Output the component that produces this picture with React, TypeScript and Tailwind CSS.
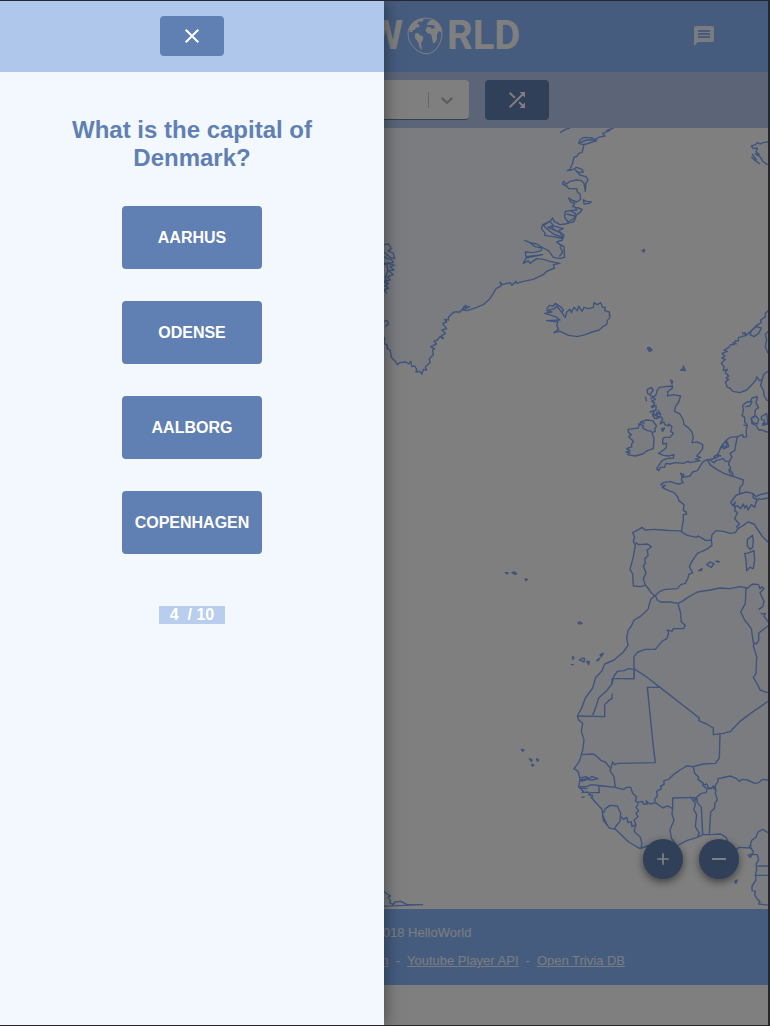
import { MdAdd, MdClose, MdMessage, MdRemove, MdShuffle } from "react-icons/md";

const northAtlantic = [
  // Greenland
  "M700,24 L680,32 690,31 668,40 675,48 655,52 648,58 636,66 612,74 606,98 596,100 592,108 582,112 578,130 570,148 562,152 575,150 590,142 606,148 610,156 596,158 586,150 600,165 618,170 624,180 618,190 616,214 612,190 604,182 590,180 570,184 560,192 550,184 548,192 560,198 566,206 590,206 592,216 600,222 602,238 590,246 575,240 566,234 572,246 584,250 578,262 596,264 606,268 600,278 590,284 584,300 580,306 570,308 556,312 540,314 522,304 518,294 510,304 488,314 484,326 496,340 494,346 520,350 548,356 552,346 536,332 550,326 530,320 510,316 524,330 546,350 548,360 530,366 544,378 538,372 552,380 554,412 540,416 520,412 505,392 490,384 470,372 450,368 434,361 450,368 465,380 486,384 484,392 460,398 436,396 438,410 488,404 438,414 430,430 445,422 450,430 470,416 490,418 510,424 540,430 520,434 524,444 500,454 490,464 460,478 430,484 410,490 408,484 396,496 390,488 366,494 360,486 364,498 348,506 340,520 330,536 310,554 290,562 262,572 250,570 268,560 250,562 258,556 240,576 222,576 205,592 206,600 194,598 200,606 188,610 200,626 186,630 196,640 184,648 190,656 180,650 172,660 162,664 170,672 152,680 164,686 158,690 160,704 148,716 150,728 136,740 140,750 130,748 126,762 118,754 108,756 110,748 104,738 96,740 92,724 86,732 76,726 60,728 52,734 44,722 34,712 30,690 22,686 22,676 12,670 14,654 L-40,600 -40,10 700,10Z",
  "M638,54 L612,52 600,60 596,70 610,74 625,70 650,62Z",
  "M600,68 L620,60 645,60",
  "M540,38 L556,28 570,24",
  "M610,240 L620,244 634,246 626,250 612,252Z",
  "M556,274 L572,272 586,280 584,294 564,306 554,292Z",
  "M560,282 L584,288 M568,272 L590,270 586,262 576,258",
  "M490,316 L510,304 520,316 504,322 540,338 550,354 520,342 500,326Z",
  "M540,380 L548,396 538,410",
  "M12,374 L26,372 34,386 24,392 40,400 44,416 30,412 12,396 M12,410 L22,416 34,418 40,428 12,430 M12,434 L24,430 44,436 30,440 42,450 26,452 40,464 22,470 30,480 12,484 M12,486 L26,490 14,498 26,504 12,510 20,520 M20,430 L24,452 16,470 20,498",
  "M12,604 L22,602 26,612 16,620",
  // Iceland
  "M500,568 L508,556 520,558 526,550 544,562 550,570 546,578 556,592 560,576 570,568 574,578 582,562 592,572 596,558 606,574 612,562 626,566 640,562 642,548 652,554 662,548 668,562 676,562 674,572 688,576 690,592 682,602 680,614 668,620 658,630 636,636 616,644 592,650 566,646 540,634 522,638 536,628 530,616 534,606 500,602 540,600 526,590 494,580 516,576 500,572 524,566 530,558 548,580",
];

const europe = [
  // Continental Europe with Iberia
  "M490,392 L470,396 456,390 446,390 440,378 426,370 424,356 434,348 436,330 446,322 438,310 442,290 426,294 420,306 404,312 398,318 400,332 396,346 404,352 404,366 412,376 408,392 410,410 400,412 398,404 382,410 360,412 346,424 334,440 324,462 312,470 318,474 300,478 278,486 272,496 262,512 248,516 240,528 218,532 222,524 212,520 216,530 214,540 220,548 206,552 190,548 182,544 160,548 152,554 166,556 156,562 176,572 192,578 204,592 206,602 222,614 220,632 228,636 230,642 220,644 220,660 214,694 200,692 180,692 160,690 130,688 106,690 96,682 84,690 68,698 74,712 70,724 76,736 70,770 60,808 68,822 70,858 90,860 108,856 122,876 134,888 150,874 166,868 202,866 212,854 226,850 234,834 236,824 248,818 238,800 246,784 262,760 290,748 306,736 304,720 306,704 318,692 340,694 360,700 376,698 384,686 400,676 414,666 432,672 444,690 456,708 474,726 500,740 500,392Z",
  "M76,728 L86,734 112,732 124,740 112,750 114,768 104,776 106,790 100,798 108,820 100,836 106,856",
  "M214,694 L224,702 232,706 260,712 264,708 278,716 288,722 304,720",
  "M278,486 L292,478 300,494 320,508 342,520 364,528 372,530 400,540 398,554 390,562 388,582",
  "M300,480 L312,488 318,482 340,476 346,484 358,484 356,494 362,504 358,516 366,524",
  "M314,472 L326,470 320,464 334,468 M330,448 L336,436 348,442 352,426 356,440 342,446 336,440 M338,434 L348,424 352,432",
  "M382,410 L378,430 374,452 360,460 366,470 358,484 M354,508 L366,516 370,528",
  "M388,582 L376,588 362,608 368,616 376,606 372,620 384,618 392,626 400,612 404,624 410,616 414,630 424,614 434,622 438,606 446,600 430,594 428,580 410,576Z",
  "M428,580 L438,590 450,584 474,578 M438,606 L446,596 456,598 474,594",
  "M376,620 L374,632 382,638 374,656 388,672 380,680 384,686",
  "M424,354 L438,348 446,358 442,372 428,368Z M454,350 L470,340 474,372 458,376 464,362 454,358Z M398,316 L410,306 426,304 420,318 406,320",
  "M400,376 L412,376 M456,372 L474,368",
  // Norway and Sweden
  "M500,0 L474,32 466,40 466,50 452,60 454,68 440,76 424,92 410,104 404,98 396,110 386,112 384,124 376,122 372,134 362,134 356,142 342,150 352,154 336,160 344,168 336,174 346,178 334,190 342,200 340,212 352,208 346,218 356,228 348,234 356,238 346,246 352,262 360,264 368,274 390,278 410,270 424,256 438,240 440,230 448,242 456,240 452,256 460,270 462,286 470,300 500,310Z",
  "M424,92 L438,80 454,84 446,100 432,110 420,104Z M396,98 L410,104 400,110 M366,128 L380,132",
  "M474,94 L466,104 470,120 466,140 474,160 M456,240 L462,222 474,214",
  // Great Britain
  "M148,262 L164,260 188,258 186,266 174,274 172,288 190,284 212,288 206,306 196,320 194,334 210,342 220,360 222,374 234,382 246,396 250,412 246,428 262,426 278,434 278,446 268,460 260,468 272,472 256,478 270,482 240,488 234,484 220,490 196,488 180,492 168,490 164,502 152,502 146,512 140,506 156,482 170,476 190,474 192,464 176,468 160,466 146,460 152,456 168,444 170,430 158,432 158,418 162,412 180,412 190,400 182,394 186,380 176,372 176,378 164,374 162,366 150,372 158,356 150,348 140,356 142,340 128,348 132,334 120,336 138,330 138,316 126,322 134,308 124,304 136,298 130,292 138,284 142,270Z",
  "M112,268 L124,262 130,270 120,284 112,280Z M120,286 L130,290 122,298 M106,290 L110,304 M122,318 L130,324 M128,342 L148,352 134,356Z M154,386 L164,384 158,394Z M138,336 L152,344 144,330",
  // Ireland
  "M54,388 L70,386 84,384 88,374 96,364 110,360 128,362 140,378 134,386 136,394 126,398 132,414 130,446 112,452 98,462 76,468 52,464 60,458 48,456 60,452 50,446 66,440 64,434 70,424 56,410 64,404 56,398Z",
  "M84,372 L100,376 98,384 112,392 126,394 M90,366 L104,370",
  "M112,144 L118,142 126,150 118,154Z M118,144 L122,152 M212,210 L220,206 220,198 226,212Z M182,240 L186,252 188,244Z M0,46 L-4,44",
  // Mediterranean islands
  "M428,706 L430,720 428,742 420,748 412,738 412,718Z M432,752 L434,780 430,806 420,802 410,812 408,780 404,760 412,760 422,756Z M290,794 L300,786 312,792 304,802Z M266,812 L276,806 274,812Z M316,784 L328,786 320,782",
];

const africa = [
  "M286,106 L272,118 264,148 240,170 222,180 214,198 204,212 200,234 204,256 190,276 162,300 134,312 126,332 106,354 98,384 76,414 64,446 52,468 56,480 68,490 64,514 72,540 68,570 64,584 58,604 42,626 54,634 60,656 56,682 70,694 66,698 84,696 94,708 100,720 126,748 130,782 142,796 148,804 166,808 206,846 240,866 262,858 300,850 350,858 380,842 412,832 430,824 450,824 482,822 498,832 510,860 532,868 536,862 572,864 580,874 578,884 592,884 596,900 588,912 590,930 586,944 588,960 576,978 576,992 586,994 584,1004 592,1018 600,1024 596,1032 660,1040 660,190 624,184 612,168 616,160 604,162 592,152 608,140 612,124 600,98 612,86 606,80 600,86 596,74 580,72 572,76 564,84 540,80 510,86 480,84 450,90 412,96 384,112 366,124 354,130 330,126 302,126 292,120Z",
  "M558,84 L556,130 542,156 554,180 574,206 580,248 588,252 596,242 596,220 608,210 624,198",
  "M582,248 L580,258 590,290 588,340 580,352 594,376 600,390 624,398",
  "M354,130 L362,160 364,186 376,196 370,206 340,206 336,214 322,210 326,220 320,236 306,244 286,268 256,268 234,276 222,290 222,356 156,356 156,416 148,420 134,434 134,470 52,468",
  "M222,328 L206,326 192,332 172,334 162,348 156,372 140,392 116,414 108,440 98,466",
  "M156,356 L222,356 222,328",
  "M222,326 L264,354 300,382 418,474 416,482 440,492 460,504 460,524 490,520 512,514 540,484 572,460 624,424",
  "M300,382 L262,382 280,560 286,608 174,610 164,614 158,606 152,626",
  "M64,584 L100,582 112,590 124,602 136,606 152,626 150,632 162,650 166,682",
  "M60,654 L78,650 86,656 96,650 114,656 96,660 84,658 62,664 M58,660 L84,656 M60,680 L80,680 94,674 130,678 166,682 M60,684 L82,686 M116,678 L118,698 90,698 M84,704 L98,706 92,716",
  "M166,682 L190,688 200,682 212,682 218,700 230,712 226,722 236,730 228,742 236,752 228,760 234,770 222,780 228,794 216,800 214,786 204,788 200,772 190,778 184,770",
  "M130,760 L136,746 150,736 172,738 182,760 180,784 168,798 164,806 M128,766 L142,796",
  "M228,794 L222,812 228,820 240,830 246,850 242,866",
  "M232,728 L248,724 250,732 262,732 258,722 270,732 286,728 300,738 310,744 322,738 338,746 336,762 342,780 330,810 334,834 350,858",
  "M286,728 L284,718 292,708 290,694 304,686 302,678 312,674 312,662 326,658 340,644 360,630 380,618 400,620",
  "M400,620 L430,612 466,610 478,594 480,522",
  "M400,620 L404,640 416,652 414,658 430,670 428,676 442,688 438,698 424,700 410,712 338,714 338,746",
  "M390,710 L406,730 402,750 410,764 406,800 418,820 412,830 M400,712 L406,722 410,712 412,728 424,742 428,822",
  "M442,688 L456,680 468,690 466,700 472,720 464,730 464,744 452,756 448,822",
  "M428,676 L440,672 444,682 454,686 460,678 466,690 466,676 474,664 474,656 484,654 510,648 530,656 538,664 546,658 562,660 584,670 596,668 608,658 624,660",
  "M572,864 L572,850 576,840 588,832 594,816 608,808 624,818 M566,856 L576,868 M592,918 L624,918 M586,946 L624,946",
  "M564,886 L576,882 572,892Z M524,964 L532,960 528,970Z M64,712 L74,710",
  "M54,188 L60,186 66,190 58,192Z M38,290 L42,292 38,298Z M32,314 L42,314 M58,300 L68,294 74,296 72,306 64,302Z M80,304 L88,304 86,314Z M110,302 L120,294 114,302Z M120,284 L130,280 124,290Z",
  // Cape Verde and the Azores
  "M-116,568 L-108,570 -112,574Z M-92,596 L-84,600 -86,604Z M-84,612 L-78,616 -84,618Z M-70,596 L-64,600 -68,604Z",
  "M-164,38 L-156,38 -158,42Z M-144,38 L-136,36 -130,42 -138,42Z M-104,56 L-98,58 -102,62Z",
];

const svalbard = [
  "M600,425 L578,428 572,432 562,428 556,434 544,438 550,446 562,444 558,456 568,464 556,462 572,472 578,484 592,494 600,494",
  "M544,470 L556,482 570,492 M546,462 L560,480",
  "M216,752 L224,748 222,756Z",
];

const southAmerica = ["M36,30 L52,42 62,48 54,52 62,62 58,68 70,74 74,66 92,64 112,74 158,74 L20,80 20,34Z"];

function Coastlines({ paths, transform }: { paths: string[]; transform: string }) {
  return (
    <g transform={transform}>
      {paths.map((d) => (
        <path key={d} d={d} vectorEffect="non-scaling-stroke" />
      ))}
    </g>
  );
}

function WorldMap() {
  return (
    <svg
      viewBox="0 128 768 781"
      role="img"
      aria-label="World map"
      className="block h-auto w-full fill-[#f5f9ff] stroke-[#7da8fa] stroke-[1.4px]"
      strokeLinejoin="round"
    >
      <Coastlines paths={northAtlantic} transform="translate(380 120) scale(0.33333)" />
      <Coastlines paths={svalbard} transform="translate(570 0) scale(0.33333)" />
      <Coastlines paths={africa} transform="translate(560 560) scale(0.33333)" />
      <Coastlines paths={europe} transform="translate(610 300) scale(0.33333)" />
      <Coastlines paths={southAmerica} transform="translate(370 880) scale(0.33333)" />
    </svg>
  );
}

function Globe() {
  return (
    <svg viewBox="0 0 36 38" className="h-[38px] w-9 fill-current" aria-hidden="true">
      <path
        d="M18 1.2C28 .8 35 7 35 16.500C35 25 29 36.500 20 36.800C11 37 1 27 1 17C1 8 8 1.500 18 1.200Z"
        className="fill-none stroke-current stroke-1"
      />
      <path d="M2 12C4 6 9 2.500 15 2L17 3L14 5L12 4L10 7L13 8L11 11L9 10L8 13L5 13L6 15L3 15Z" />
      <path d="M8 16.500L11 16L13 18L16.500 20L15.500 24L14 26L15 33L13 31L11 25L8 21Z" />
      <path d="M20 8L21 5L24 3L27 3L31 6L34 11L34.500 16L32 14L30 17L30 22L28 26L26 26L25 21L24 17L20 16L18.500 13L20 10L23 10L25 12L28 11L27 8L24 8Z" />
    </svg>
  );
}

function Header() {
  return (
    <header className="relative flex h-[71px] items-center justify-center bg-[#8cb8ff] pb-px">
      <h1 className="flex items-center font-[Roboto,'Liberation_Sans',sans-serif] text-[40px] leading-none font-bold text-white">
        <span>HELLO</span>
        <span className="flex items-center gap-1">
          W<Globe />
          RLD
        </span>
      </h1>
      <button
        type="button"
        aria-label="Open trivia"
        className="absolute right-8 flex h-10 w-16 items-center justify-center text-[#f4f8ff]"
      >
        <MdMessage className="size-6" />
      </button>
    </header>
  );
}

function CountryBar() {
  return (
    <div className="flex justify-center gap-4 bg-[#b6caee] py-2">
      <div className="relative w-[249px]">
        <select
          aria-label="Country"
          className="h-10 w-full appearance-none rounded border-b border-[#6080b3] bg-white px-3 text-base text-gray-500"
        >
          <option>Denmark</option>
        </select>
        <span className="pointer-events-none absolute inset-y-0 right-0 flex items-center gap-2 py-3 pr-3">
          <span className="h-4 w-px bg-[#ccc]" />
          <svg viewBox="0 0 20 20" className="size-5 fill-[#bbb]" aria-hidden="true">
            <path d="M4.516 7.548c.436-.446 1.043-.481 1.576 0L10 11.295l3.908-3.747c.533-.481 1.141-.446 1.574 0 .436.445.408 1.197 0 1.615-.406.418-4.695 4.502-4.695 4.502a1.095 1.095 0 0 1-1.576 0S4.924 9.581 4.516 9.163s-.436-1.170 0-1.615z" />
          </svg>
        </span>
      </div>
      <button
        type="button"
        aria-label="Random country"
        className="flex h-10 w-16 items-center justify-center rounded bg-[#6080b3] text-white"
      >
        <MdShuffle className="size-6" />
      </button>
    </div>
  );
}

function Footer() {
  return (
    <footer className="bg-[#8cb8ff] py-[10px] text-center text-[13px] leading-7 whitespace-nowrap text-[#f4f8ff]">
      <p>Copyrights © 2018 HelloWorld</p>
      <nav className="flex justify-center gap-[7px]">
        <a href="#countries" className="underline">REST Countries API</a>
        <span>-</span>
        <a href="#music" className="underline">Music from Last.fm</a>
        <span>-</span>
        <a href="#youtube" className="underline">Youtube Player API</a>
        <span>-</span>
        <a href="#trivia" className="underline">Open Trivia DB</a>
      </nav>
    </footer>
  );
}

const answers = ["AARHUS", "ODENSE", "AALBORG", "COPENHAGEN"];

function TriviaPanel() {
  return (
    <aside className="absolute inset-y-0 left-0 flex w-1/2 flex-col items-center bg-[#f3f8ff] shadow-[0_0_16px_rgba(0,0,0,0.5)]">
      <div className="flex h-[71px] w-full items-center justify-center bg-[#b0c7ec] pb-px">
        <button
          type="button"
          aria-label="Close"
          className="flex h-10 w-16 items-center justify-center rounded bg-[#6080b3] text-white"
        >
          <MdClose className="size-6" />
        </button>
      </div>
      <h2 className="mt-11 max-w-72 text-center text-2xl leading-7 font-bold text-[#6080b3]">
        What is the capital of Denmark?
      </h2>
      <div className="mt-[34px] flex flex-col gap-8">
        {answers.map((answer) => (
          <button
            key={answer}
            type="button"
            className="h-[63px] w-[140px] rounded bg-[#6080b3] text-base font-bold text-white"
          >
            {answer}
          </button>
        ))}
      </div>
      <p className="mt-[52px] bg-[#b9ceef] px-[11px] text-base leading-[18px] font-bold text-white">
        4&nbsp; / 10
      </p>
    </aside>
  );
}

export default function App() {
  return (
    <div className="relative min-h-screen overflow-hidden border-t border-r-2 border-b border-[#25272d] bg-white font-['Liberation_Sans',Arial,sans-serif]">
      <Header />
      <CountryBar />
      <main className="relative">
        <WorldMap />
        <div className="absolute right-[29px] bottom-[30px] flex gap-4">
          <button
            type="button"
            aria-label="Zoom in"
            className="flex size-10 items-center justify-center rounded-full bg-[#6080b3] text-white shadow-[0_3px_8px_rgba(0,0,0,0.5)]"
          >
            <MdAdd className="size-5" />
          </button>
          <button
            type="button"
            aria-label="Zoom out"
            className="flex size-10 items-center justify-center rounded-full bg-[#6080b3] text-white shadow-[0_3px_8px_rgba(0,0,0,0.5)]"
          >
            <MdRemove className="size-6" />
          </button>
        </div>
      </main>
      <Footer />
      <div className="absolute inset-0 bg-black/50" />
      <TriviaPanel />
    </div>
  );
}
